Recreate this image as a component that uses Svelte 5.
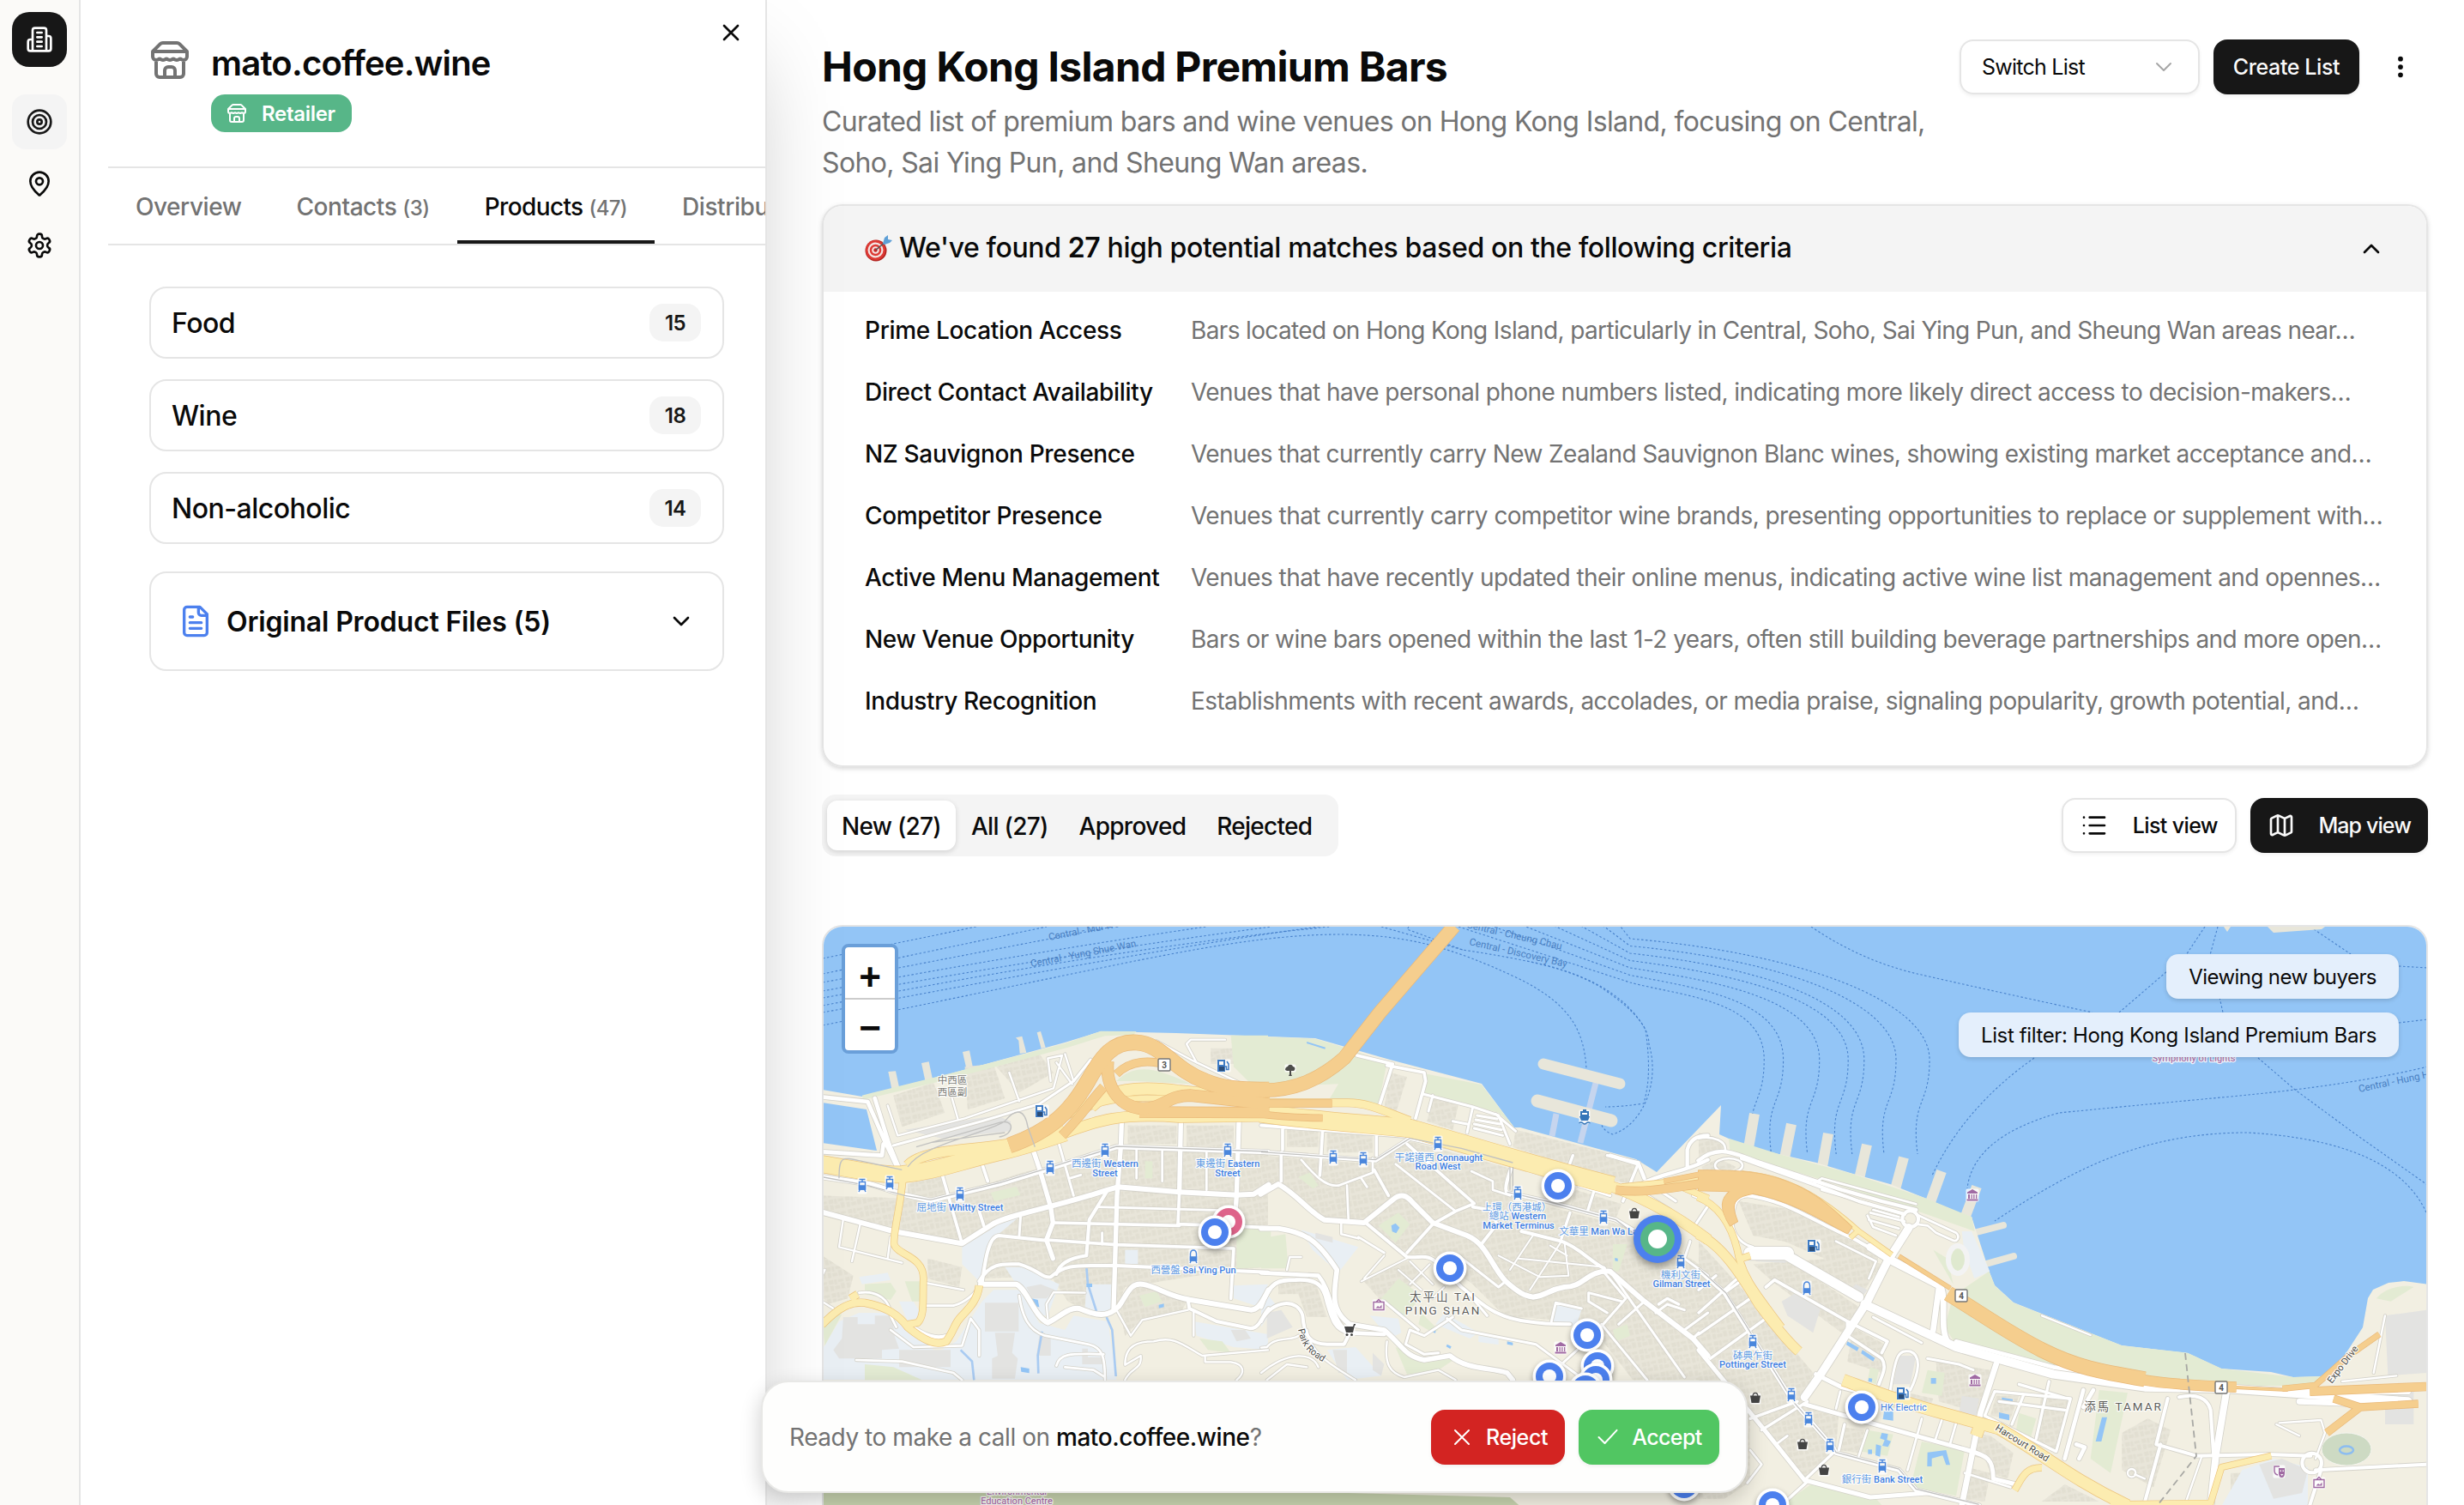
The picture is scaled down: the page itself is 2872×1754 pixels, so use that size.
<script>
  // 24px stroke icons, one path string each
  const icons = {
    building: 'M6 22V4a2 2 0 0 1 2-2h8a2 2 0 0 1 2 2v18Z M6 12H4a2 2 0 0 0-2 2v6a2 2 0 0 0 2 2h2 M18 9h2a2 2 0 0 1 2 2v9a2 2 0 0 1-2 2h-2 M10 6h4 M10 10h4 M10 14h4 M10 18h4',
    target: 'M2 12a10 10 0 1 0 20 0a10 10 0 1 0-20 0 M6 12a6 6 0 1 0 12 0a6 6 0 1 0-12 0 M10 12a2 2 0 1 0 4 0a2 2 0 1 0-4 0',
    pin: 'M20 10c0 4.993-5.539 10.193-7.399 11.799a1 1 0 0 1-1.202 0C9.539 20.193 4 14.993 4 10a8 8 0 0 1 16 0 M9 10a3 3 0 1 0 6 0a3 3 0 1 0-6 0',
    settings: 'M12.22 2h-.44a2 2 0 0 0-2 2v.18a2 2 0 0 1-1 1.73l-.43.25a2 2 0 0 1-2 0l-.15-.08a2 2 0 0 0-2.73.73l-.22.38a2 2 0 0 0 .73 2.73l.15.1a2 2 0 0 1 1 1.72v.51a2 2 0 0 1-1 1.74l-.15.09a2 2 0 0 0-.73 2.73l.22.38a2 2 0 0 0 2.73.73l.15-.08a2 2 0 0 1 2 0l.43.25a2 2 0 0 1 1 1.73V20a2 2 0 0 0 2 2h.44a2 2 0 0 0 2-2v-.18a2 2 0 0 1 1-1.73l.43-.25a2 2 0 0 1 2 0l.15.08a2 2 0 0 0 2.73-.73l.22-.39a2 2 0 0 0-.73-2.73l-.15-.08a2 2 0 0 1-1-1.74v-.5a2 2 0 0 1 1-1.74l.15-.09a2 2 0 0 0 .73-2.73l-.22-.38a2 2 0 0 0-2.73-.73l-.15.08a2 2 0 0 1-2 0l-.43-.25a2 2 0 0 1-1-1.73V4a2 2 0 0 0-2-2z M9 12a3 3 0 1 0 6 0a3 3 0 1 0-6 0',
    store: 'm2 7 4.41-4.41A2 2 0 0 1 7.83 2h8.34a2 2 0 0 1 1.42.59L22 7 M4 12v8a2 2 0 0 0 2 2h12a2 2 0 0 0 2-2v-8 M15 22v-4a2 2 0 0 0-2-2h-2a2 2 0 0 0-2 2v4 M2 7h20 M22 7v3a2 2 0 0 1-2 2a2.7 2.7 0 0 1-1.59-.63.7.7 0 0 0-.82 0A2.7 2.7 0 0 1 16 12a2.7 2.7 0 0 1-1.59-.63.7.7 0 0 0-.82 0A2.7 2.7 0 0 1 12 12a2.7 2.7 0 0 1-1.59-.63.7.7 0 0 0-.82 0A2.7 2.7 0 0 1 8 12a2.7 2.7 0 0 1-1.59-.63.7.7 0 0 0-.82 0A2.7 2.7 0 0 1 4 12a2 2 0 0 1-2-2V7',
    close: 'M18 6 6 18 M6 6l12 12',
    file: 'M15 2H6a2 2 0 0 0-2 2v16a2 2 0 0 0 2 2h12a2 2 0 0 0 2-2V7Z M14 2v4a2 2 0 0 0 2 2h4 M10 9H8 M16 13H8 M16 17H8',
    down: 'm6 9 6 6 6-6',
    up: 'm18 15-6-6-6 6',
    more: 'M12 5v.01 M12 12v.01 M12 19v.01',
    list: 'M3 5v.01 M3 12v.01 M3 19v.01 M8 5h13 M8 12h13 M8 19h13',
    map: 'M14.106 5.553a2 2 0 0 0 1.788 0l3.659-1.83A1 1 0 0 1 21 4.619v12.764a1 1 0 0 1-.553.894l-4.553 2.277a2 2 0 0 1-1.788 0l-4.212-2.106a2 2 0 0 0-1.788 0l-3.659 1.83A1 1 0 0 1 3 19.381V6.618a1 1 0 0 1 .553-.894l4.553-2.277a2 2 0 0 1 1.788 0z M15 5.764v15 M9 3.236v15',
    check: 'M21 5 9 18l-6-6'
  };

  const categories = [
    { name: 'Food', count: 15 },
    { name: 'Wine', count: 18 },
    { name: 'Non-alcoholic', count: 14 }
  ];

  const criteria = [
    ['Prime Location Access', 'Bars located on Hong Kong Island, particularly in Central, Soho, Sai Ying Pun, and Sheung Wan areas near…', 'tightest'],
    ['Direct Contact Availability', 'Venues that have personal phone numbers listed, indicating more likely direct access to decision-makers…', 'tight'],
    ['NZ Sauvignon Presence', 'Venues that currently carry New Zealand Sauvignon Blanc wines, showing existing market acceptance and…', 'tighter'],
    ['Competitor Presence', 'Venues that currently carry competitor wine brands, presenting opportunities to replace or supplement with…', ''],
    ['Active Menu Management', 'Venues that have recently updated their online menus, indicating active wine list management and opennes…', ''],
    ['New Venue Opportunity', 'Bars or wine bars opened within the last 1-2 years, often still building beverage partnerships and more open…', ''],
    ['Industry Recognition', 'Establishments with recent awards, accolades, or media praise, signaling popularity, growth potential, and…', 'tighter']
  ];

  // Map geometry. Every tile has its own origin, three units to a pixel.
  const tiles = [
    {
      x: 958, y: 1180,
      land: [
        'M232 207L258 205 272 270 245 272Z', 'M348 177L374 172 388 238 362 242Z', 'M492 138L516 133 529 198 506 200Z',
        'M678 88L700 83 715 140 692 144 688 98Z', 'M752 70L765 66 782 122 767 126Z'
      ],
      green: [
        'M1030 240C1100 170 1180 200 1290 250L1100 240Z', 'M1430 80L1560 80V262L1500 250 1440 190Z', 'M150 950l90-5 20 30-20 30-90-20z',
        'M290 940h55v70h-30z', 'M1450 750h120v140l-120 5z', 'M0 1065l70-10-60 110z', 'M150 1230l100 10 100 45h-200z',
        'M1320 1140l80 10 30 40-80-10z', 'M590 630l90-22 14 30-90 22z', 'M1130 520h26v60h-26z', 'M140 290L440 215 850 108 975 65 1100 66 1090 78 990 82 860 122 450 232 145 305Z', 'M1110 990l60-15 20 35-60 20z'
      ],
      pale: [
        'M60 1080L130 1050H270L400 1190 470 1150 560 1010 600 970H690L760 1085 850 1110 880 1060 1000 1080 1030 1285H0V1180Z',
        'M490 820L620 740 690 715 600 790 570 880 550 940 490 880Z', 'M640 890L700 890 830 950 790 1060 740 1060 700 980Z',
        'M925 950h90v90l-50 10-45-20Z', 'M1300 1080L1560 1125V1180L1440 1170 1310 1130Z', 'M1440 955L1560 950 1530 1030 1440 1000Z', 'M270 1010l50 0 30 50-50 20z', 'M130 925l100-15 10 25-100 15z', 'M1060 830h45v50h-45z'
      ],
      grey: [
        'M75 1065h50v25h60v-30h60l10 75 15 40-60 5v30H60l-20-30 30-40z', 'M570 1015h118v100h-118z', 'M605 1120h70l-10 70 20 20-10 70h-80v-70l20-10z', 'M270 1180h180v60h-180z',
        'M290 410l320-50 50 20v35l-240 25z', 'M715 960l50-10 50 20-30 30-50 0z', 'M760 1130h40v70h-50z', 'M910 1175h20v30h60v25h-80z', 'M1430 1110h50l20 30-50 10z'
      ],
      block: [
        'M250 290L390 245 430 350 280 400Z', 'M500 190L600 180 640 300 510 340Z', 'M610 190L760 145 810 210 690 280Z', 'M1360 125h100v55h-100z', 'M1480 115h80v95h-80z',
        'M0 640L290 650 380 665 700 560 1040 470 1560 490V890L1440 900 1060 960 1040 1010 960 1060 860 1010 800 920 560 930 490 810 250 765 0 700Z',
        'M300 600L420 565 450 640 380 650 300 630Z', 'M1070 395h170v65h-170z', 'M1275 395h165v75h-165z', 'M0 850L110 920 90 1000 20 1020 0 990Z', 'M1040 1030l70-80 170 50-20 40-140 30-60 60z', 'M370 860l120 30-10 70-110-30z'
      ],
      water: ['M735 1000l20 5 5 25-18-2z', 'M925 948h20v12h-20z', 'M695 1240l30 5v16l-28-5z', 'M1178 1022l18-4 0 12-18 4z'],
      stream: ['M925 890L930 950 960 1045', 'M995 1065L1015 1110 1028 1272', 'M770 1115L755 1200 757 1262', 'M485 1180L525 1220 532 1285'],
      white: [
        [14, 'M0 295L160 312 220 450 265 545M185 300L235 460 270 545M0 487L210 500 215 460'],
        [7, 'M230 325L265 430 500 370 810 265 840 150 790 160 800 240M655 210L690 310M455 300L475 370M1170 100L1300 170 1470 250M1410 95H1290L1275 110 1310 175M820 175L875 250M850 145L880 240'],
        [9, 'M250 465L560 380 760 320 880 240 940 165'],
        [16, 'M0 575L170 600 290 638 380 658 620 600 800 545 1030 470 1560 488'],
        [18, 'M0 698L250 765 490 808 600 738C660 705 800 685 1000 620L1035 610 1250 628 1450 638 1510 635 1562 602'],
        [11, 'M560 530L580 590M420 565L490 808M550 695L566 745'],
        [16, 'M735 470L765 560 800 680 808 735 785 795 808 860'],
        [9, 'M825 445L880 640M695 710L690 780M865 580l40-12M980 770v40'],
        [16, 'M1048 385L1045 470 1032 640 1020 1035M1255 385L1250 628M1458 385L1450 640 1446 700'],
        [11, 'M1250 628L1245 740 1560 752M808 735L1250 745M785 795L1030 812 1440 825M1440 825L1430 1000'],
        [8, 'M1100 480V580M1190 485V590M1345 490V620M965 680L1400 692'],
        [12, 'M1000 620L935 725 925 850C860 860 830 880 820 915'],
        [12, 'M560 945C570 880 580 780 620 780L785 797'],
        [12, 'M550 940C590 870 640 880 690 880C760 900 770 930 800 925C850 880 880 885 1030 885L1560 908'],
        [18, 'M555 950H680C720 970 740 1060 790 1085C840 1060 860 1030 900 1035C960 1060 1000 1070 1040 1025C1070 980 1080 945 1120 950C1180 960 1200 990 1290 1005L1500 1040C1530 1040 1545 1000 1562 970'],
        [12, 'M1280 1005L1285 1035 1380 1080 1500 1105C1530 1105 1540 1060 1562 1035'],
        [7, 'M1030 1040L1080 1130 1120 1075 1280 1040M1060 1230C1060 1160 1110 1150 1160 1150C1230 1130 1260 1160 1330 1200L1560 1180M1340 1205V1222H1430C1480 1230 1480 1260 1450 1285M1060 1285C1080 1240 1120 1250 1115 1200L1060 1232M1300 1045V1130'],
        [7, 'M360 945L495 970M60 820L280 875M75 720L60 820M135 735L105 870M240 785L230 860M790 1070L785 1020 810 978 920 980M0 1010L40 1035'],
        [8, 'M130 980C200 970 240 1010 240 1060L260 1100M360 1025H460C500 1015 540 980 550 955M240 1110L320 1170 490 1165 520 1070 550 1110V1200M120 1215L280 1220 460 1260 490 1285'],
        [8, 'M690 990C700 1060 720 1110 780 1130L930 1160C980 1170 990 1200 990 1285M820 1235C830 1195 860 1190 985 1195M850 1240L950 1250 990 1275M0 920L10 900'],
        [14, 'M310 1095C360 1130 400 1145 440 1130']
      ],
      yellow: [
        [58, 'M0 530C100 545 200 570 280 566C400 555 480 520 620 488C700 470 760 450 850 420'],
        [34, 'M300 535C360 470 560 485 700 450C800 400 860 350 930 310'],
        [36, 'M850 420C960 380 1040 350 1250 366L1564 362'],
        [40, 'M940 330C1000 270 1100 255 1250 275L1564 308'],
        [18, 'M900 350C1000 290 1100 300 1300 300'],
        [22, 'M283 580C275 680 250 760 252 810C265 850 355 850 355 930C352 1010 360 1060 335 1085L300 1090'],
        [24, 'M0 1092C60 1030 100 1010 150 1015C230 1030 270 1060 300 1100C360 1150 400 1165 435 1150C470 1100 460 1090 490 1060C520 1030 545 1000 550 955M100 1000L125 985']
      ],
      orange: [
        [30, 'M840 430C900 370 940 310 985 260'],
        [26, 'M1030 215C1080 165 1150 165 1210 185'],
        [36, 'M1110 348L1564 350'],
        [40, 'M1000 170C990 260 1040 325 1110 335C1200 340 1200 290 1290 290L1564 320'],
        [52, 'M655 465C800 415 870 345 930 240C980 150 1020 100 1100 105C1190 110 1230 200 1340 240C1400 265 1460 272 1564 270']
      ],
      rail: 'M0 575L160 605 290 640 380 655 620 596 800 541 1030 468 1560 486M300 540C350 460 560 430 640 380C680 330 710 340 720 400L745 470M60 580C60 500 70 505 140 520L280 550M380 455L560 430 640 420M330 470L620 385C680 370 670 430 620 435'
    },
    {
      x: 1470, y: 1180,
      land: [],
      green: [
        'M0 84L190 92 300 125 440 175 410 322 240 300 270 250 0 260Z', 'M580 215L770 252 885 402 830 350 560 280Z', 'M410 745L480 700 520 740 470 805Z',
        'M0 790l85-15 10 120h-95z', 'M130 575l40-15 30 45-20 10z', 'M1230 810h50l-30 95h-20z', 'M420 1000l60-70 80 60-60 80z', 'M470 1170l110 45 100-5-60 40-110 15z',
        'M1230 1110l50-20 10 40-50 20z', 'M560 1050l60 60-20 10-50-30z'
      ],
      pale: ['M140 760L340 820 270 910 180 830Z', 'M0 960l50 60-50 80z', 'M1030 1020l90 20-20 60-80-20z', 'M640 1050l120 70-30 20-120-50z', 'M230 1180l100-10 90 100-120 15z', 'M380 1060l100 10 10 50-40 20z', 'M760 1130l70 10 0 22-70-10z'],
      grey: ['M20 1050l50-10 40 60-90 40z', 'M250 1180h50v80h-30z', 'M190 770l60 15 0 20-60-15z', 'M390 1190l40 40-10 40-30-20z'],
      block: [
        'M0 115h45l25 20v80H0z', 'M90 405h110v65h-110z', 'M230 415h160v75h-160z', 'M450 210l60 15-40 130-40-15z', 'M600 300l90 20-20 90-90-30z',
        'M0 500L400 530 520 450 870 545 860 640 1220 735 1380 780 1560 900V1285H1300L1180 1130 1080 1080 850 1060 740 950 600 850 520 850 360 730 230 720 60 610 0 630Z',
        'M890 410L1310 515 1300 590 1090 540 880 470Z', 'M1100 620l160 50-20 50-160-40z', 'M350 930l160-60 60 50-130 110z', 'M60 940l130 5 40 120-70 0-30-80-70 0z', 'M1220 500l90 20-20 80-90-20z'
      ],
      water: ['M455 745l15-8 14 15-12 20-14-6z', 'M466 1035l30 20-4 10-30-20z', 'M595 1105l16 6-2 10-14-6z', 'M860 1150l20 4v10l-20-4z', 'M650 1160l15 8-4 8-14-8z', 'M1237 858l10 2v10l-10-2z', 'M160 102l65 20-2 6-64-20z'],
      stream: [],
      white: [
        [13, 'M0 488L400 518 520 440 700 480 880 530C860 580 850 620 860 630L1000 660 1240 725 1300 760'],
        [11, 'M0 395L500 432M75 400V480M215 410L205 570M403 430V500M70 590V490'],
        [18, 'M-2 635L60 600C130 640 160 690 220 725L360 735 460 655C490 630 510 640 530 665L600 735 720 780C790 810 800 880 855 940C900 980 920 990 950 995C1000 990 1000 970 1060 960C1130 960 1140 900 1220 905L1340 1010 1510 1140 1562 1200'],
        [8, 'M140 515C180 560 220 610 270 605L390 560V510M300 605L305 720M350 580l20 30M340 790L280 775V740M340 785L430 840'],
        [11, 'M395 550L445 640M510 460L745 668 680 695 600 740 510 840M740 680L800 690 825 740 770 810'],
        [8, 'M470 530L680 695M735 555L810 590V620L870 640'],
        [10, 'M880 530L1050 590M1110 605L1220 640M1165 620L1140 700M1080 700L1050 790M1210 500L1320 525 1265 660M1075 540L1090 500'],
        [12, 'M910 765L1050 800C1110 820 1150 870 1200 895M365 735L510 855C560 860 580 840 620 880L700 960C790 1030 820 1090 1080 1090'],
        [6, 'M950 780L870 900M1050 800L940 970M1060 800L1075 920 975 925 830 850M1010 815L1070 850M900 860L1200 890M510 860L350 940M590 880L520 950M430 850L360 930M480 900L560 970M520 870L600 950M640 960L600 1000'],
        [9, 'M690 850L830 960 855 940M650 1070L700 1110 960 1160 1130 1285M670 1065L570 1130 520 1110 505 1160 570 1195 620 1190M430 1010L550 1110M740 1000L790 1060'],
        [17, 'M0 755H60C160 770 200 800 265 900C255 980 240 1040 310 1090L430 1110C500 1170 500 1200 570 1215L660 1200C720 1250 800 1240 860 1260L880 1285'],
        [14, 'M0 910L200 920C250 980 240 1070 300 1115M0 1030C30 940 60 935 120 935C200 930 220 960 230 1010C250 1080 260 1110 310 1120L430 1125'],
        [12, 'M0 1080C40 1000 130 1000 145 1060C150 1130 170 1160 230 1160H290L310 1120'],
        [7, 'M130 1130C110 1150 50 1130 20 1170L0 1172M160 1110C170 1190 240 1230 330 1285M0 1260C100 1180 180 1190 200 1240M440 1150C430 1230 450 1260 500 1275L620 1250 680 1285M90 900L100 855H140M20 1285L90 1230 160 1240'],
        [9, 'M1220 905L1480 1275M1200 910L1275 1000 1170 1120 1050 1230M1145 980L1260 1010M1145 980V1010L1210 1050M1190 1090L1350 1285M1480 1110L1562 1050M1340 1010L1250 1090M1380 1050L1420 1020 1480 1040M1030 1015L1120 1035M1030 1015L1015 1080'],
        [11, 'M335 150L460 180 415 320M440 185L570 210 575 240 540 370'],
        [9, 'M565 285L740 330 720 420M740 330L830 360 870 460M600 290L585 345M670 380L720 390M755 360L825 372M750 375L835 390M745 390L840 410M745 405L845 430M820 355L890 415'],
        [13, 'M1330 600C1400 560 1480 560 1562 515M1490 540V480C1500 440 1530 430 1562 430M1220 500L1320 530 1340 580'],
        [9, 'M1500 800L1480 860 1562 920M1350 640L1430 690M1390 620L1450 660M1510 640L1560 660M1560 680L1520 740'],
        [10, 'M1390 1020l30-20 40 20M1510 1140l20-20']
      ],
      yellow: [
        [26, 'M0 316H300C380 315 440 350 520 378'],
        [62, 'M-4 352C200 380 380 390 520 405C650 440 900 520 1230 605'],
        [36, 'M1200 600C1330 640 1450 710 1564 795'],
        [20, 'M1260 610L1560 580M1470 610L1564 650']
      ],
      orange: [
        [24, 'M-4 318H248'], [22, 'M-4 354C80 368 150 368 215 369'], [28, 'M1240 620C1350 635 1450 608 1564 596'], [16, 'M1408 590L1564 560'],
        [46, 'M-4 272C120 275 210 230 290 160L415 0 675-302']
      ],
      rail: 'M0 488L400 515 520 440 700 475 880 525M860 628L1000 660 1240 725 1300 770M870 540V620M880 540V625'
    },
    {
      x: 1980, y: 1300,
      land: [],
      green: [
        'M105 80L280 135 540 205 790 288 955 355 965 405 780 340 400 215 110 130Z',
        'M890 630L1015 545 1035 595 1100 655 1380 765 1480 805 1710 830 1828 885 2080 915 2180 912 2140 945H1600L1240 900 900 800 860 740Z',
        'M820 470L870 500 890 590Z', 'M400 1285L620 1340 640 1362H290Z', 'M780 1140L930 1170 900 1330 740 1300Z', 'M1120 1040l60 20-20 70-50-30z',
        'M1400 960L1500 970 1440 1250 1370 1200Z', 'M600 880l30 10-10 50-30-10z', 'M590 1100l90 15-20 75-90-15z', 'M800 890l60 10-10 80-70-10z', 'M2370 640C2400 600 2470 590 2500 600L2420 650Z', 'M470 320L540 380 520 400 450 340Z'
      ],
      pale: ['M1900 1240L2010 1200 2130 1230V1362H1830Z', 'M920 405h34l64 140-54 25-36-100z'],
      grey: ['M1960 1220l80-20 90 40-20 80-100 20z', 'M190 480l100-20 60 30-50 25-100-5z', 'M510 620l40-30 40 20-30 40z', 'M290 650l50-30 90 40-30 100-90-60z', 'M920 980l60 10-10 60-60-10z', 'M700 840h60l-20 100h-60z', 'M2400 700L2544 680V900L2410 910Z', 'M2400 960h100v120h-100z'],
      block: [
        'M140 300L330 330 630 490 600 580 440 500 300 440 190 420Z', 'M550 495L640 520 560 640 330 510Z',
        'M0 440L200 660 400 900 370 1000 480 1180 370 1270 180 1050 170 950 0 930Z', 'M190 520L320 510 560 670 500 760 270 590Z', 'M830 860L1020 890 980 1040 840 1000Z',
        'M690 960l130 30-20 50-130-20z', 'M370 1010l120 30-10 120-60-60z', 'M500 1090l80 10-20 80-70-10z', 'M0 930h180v350l-90 60H0z', 'M540 740l110 60-10 100-120-40z',
        'M960 1110l60 10 80 60-20 90-60-20-20-50-50-10z', 'M940 1230l80 20-20 100-70-10z', 'M1040 980l80 0-30 80-70-10z', 'M1480 1110l90-50 80 40-60 200-110-60z', 'M1200 960l100 30-40 180-80-30z', 'M1860 1250h70v110h-70z', 'M1280 1290l120 60h-200z',
        'M10 180l60-30 60 30-20 20H20z', 'M0 60l70 20 20 40-90 30z'
      ],
      water: [
        'M520 790l40 22-6 12-38-22z', 'M572 820l44 28-6 12-42-28z', 'M648 1035h32v32l-36-5z', 'M800 1178l65-8 14 52-14 0-12-33-38 10v28l-16 0z', 'M1060 986l38 6v15l-38-6z', 'M1050 1038l36 8v20l-36-8z',
        'M1410 1055h18l-20 85h-20z', 'M595 918l12 2-2 12-12-2z', 'M640 1110l22 4-4 20 14 5-10 20-20-4 8-20-16-6z', 'M620 1150l18 5-4 38-16-5z', 'M812 918l18 0 0 20-18 0z', 'M592 1168l14 0v16l-14 0z'
      ],
      stream: [],
      white: [
        [13, 'M-2 158C60 110 100 120 200 160L500 260 640 300 760 330'],
        [8, 'M0 80C50 70 100 90 92 125M57 175a48 25 0 1 0 96 0a48 25 0 1 0-96 0M400 240L430 220 760 310M430 260L600 310M610 330L700 355M590 350L610 390 690 420M600 340L720 370M595 365L700 395'],
        [12, 'M150 150L400 240 560 300 720 345'],
        [12, 'M712 362a28 28 0 1 0 56 0a28 28 0 1 0-56 0'],
        [8, 'M770 350L900 410C915 425 905 445 885 435L830 410 800 385 760 380'],
        [28, 'M735 392L660 510 590 650 430 900 370 985'],
        [12, 'M120 350C120 290 150 270 200 285C330 310 400 370 540 430L680 510'],
        [28, 'M600 460L680 510 845 595'],
        [20, 'M845 595C870 640 840 740 870 790M840 600L820 750'],
        [46, 'M180 482L310 482'],
        [34, 'M300 485L560 635'],
        [30, 'M580 660L900 810 1240 905 1560 950 1850 955 2480 1000'],
        [14, 'M900 790L1240 880 1560 925 2160 975'],
        [8, 'M610 705L780 795M480 440L620 510 595 570M120 350C110 400 140 450 190 460'],
        [11, 'M235 600L265 575 520 720 520 770 640 850C660 880 640 910 630 940M520 720L660 790 640 830'],
        [20, 'M1040 870L985 1040 920 1362'],
        [10, 'M1035 965L1300 990 1250 1175 1000 1050 1035 965M1120 940L1290 990M1225 930L1180 1130M1135 980L1095 1080M1050 1000L1280 1030'],
        [14, 'M1345 960L1280 1200M1380 960L1345 1020M1320 1150L1350 1160 1330 1200'],
        [15, 'M0 820L230 1100 370 1275M0 540L90 620 330 1000 470 1160 480 1180 700 1240 760 1310 980 1364'],
        [10, 'M90 620L160 570M0 690L135 570M0 765L180 640M40 850L235 710M180 1060L345 1000M220 1100L380 1000M370 1275L470 1180M510 1080L490 1170M380 1280L290 1362M60 560L0 610'],
        [15, 'M370 1010L760 1120 940 1170C1010 1190 1030 1200 1030 1270L1110 1290M370 1275L600 1335 800 1320M410 905L500 950 600 975'],
        [8, 'M780 1060L730 1240M850 1065l-25 75M900 1075l-20 70M495 965l-15 60M930 1250L1090 1300M590 1100l-30 90M270 1150L310 1120M180 1170L220 1220 170 1285'],
        [9, 'M670 960C690 830 700 820 740 825C780 840 770 900 740 960M800 850L910 870 960 890'],
        [24, 'M1847 955L1808 1190 1790 1362'],
        [20, 'M2100 965H2480M2100 1000L2380 1010'],
        [12, 'M2544 1220L2157 1240M2176 1240L2137 1362M1640 990L1600 1150 1740 1190 1990 1185 2140 1190M1615 1150L1557 1362M1680 985C1740 970 1780 990 1790 1030L1800 1180M2110 1215a34 34 0 1 0 68 0a34 34 0 1 0-68 0'],
        [7, 'M2030 1075L2176 1065 2190 1110 2157 1200M2100 1120L2020 1080M1760 1190L1700 1362M1500 1250a14 14 0 1 0 28 0a14 14 0 1 0-28 0M1525 1255L1560 1270M2400 700L2360 900M2250 930L2440 910M1200 700L1370 768']
      ],
      yellow: [
        [16, 'M150 203C300 212 420 280 560 405L675 487M530 428L560 400'],
        [32, 'M-4 415C80 450 150 560 210 660C270 740 310 790 350 825'],
        [22, 'M-4 285C60 310 110 370 135 470C150 560 200 620 290 740M150 500L180 490'],
        [14, 'M0 232H62'],
        [40, 'M505 925C600 960 700 1000 850 1040L1050 1095C1200 1180 1300 1270 1500 1364M970 1120L985 1080'],
        [22, 'M1200 1232C1140 1230 1130 1270 1105 1310'],
        [20, 'M1440 1360L1790 1355 1828 1230 2002 1190']
      ],
      orange: [
        [13, 'M700 492L880 604'],
        [50, 'M872 622C1000 700 1080 760 1200 820C1320 880 1400 895 1560 922'],
        [34, 'M1556 925C1640 940 1750 945 1880 950'],
        [8, 'M1860 950L2060 960'],
        [28, 'M2137 965L2544 948'],
        [18, 'M2041 955L2157 943 2273 840 2380 765'],
        [24, 'M2516 1008L2313 1020 2196 1110M2313 1020L2220 990'],
        [2, 'M0 193C120 190 220 200 280 222C400 260 460 320 535 390L520 412C420 360 330 300 190 272C120 285 110 310 135 370L110 385C70 320 80 290 110 265L0 262Z', true]
      ],
      rail: 'M0 535L95 620 330 1000 470 1160 480 1178 700 1236 760 1306 980 1360'
    }
  ];

  const coast =
    'M958 1270L1005 1278 1105 1252 1241 1215 1283 1202 1371 1204 1478 1208 1533 1210 1620 1235 1727 1263 1765 1314 1772 1314 1907 1351 1931 1366 2006 1288 2004 1322 2015 1327 2033 1335 2073 1345 2117 1355 2160 1368 2203 1380 2243 1396 2283 1413 2298 1418 2318 1480 2325 1498 2347 1518 2440 1555 2473 1568 2550 1577 2589 1595 2647 1599 2673 1605 2705 1604 2728 1587 2754 1547 2760 1513 2766 1503 2784 1495 2802 1493 2832 1497V1760H958Z';

  // pier outlines as thick strokes: [width, path, round cap]
  const piers = [
    [13, 'M1799 1240L1888 1263', true], [15, 'M1792 1283L1878 1306', true],
    [12, 'M2045 1298L2038 1338', false], [12, 'M2088 1310L2080 1350', false], [12, 'M2131 1321L2124 1360', false],
    [12, 'M2176 1334L2167 1374', false], [12, 'M2219 1349L2209 1386', false], [12, 'M2263 1365L2249 1404', false],
    [12, 'M2304 1383L2290 1420', false], [8, 'M2300 1437L2335 1428', true], [8, 'M2315 1473L2347 1464', true]
  ];

  const fan = [252, 288, 356, 410, 440, 500, 563].map((end, i) => {
    const x = 1900 + end * 0.62;
    const y = 1145 - i * 8.5;
    return `M${1700 + i * 28} ${y - 65 + i * 4}L1900 ${y}C${1960 + i * 22} ${y + 16} ${x} ${1165} ${x} ${1235}C${x} 1290 ${x - 22} 1280 ${x - 14} 1345`;
  });

  const ferries = [
    'M959 1117L1138 1080', 'M959 1135L1220 1080', 'M959 1145L1297 1080', 'M959 1155Q1200 1110 1406 1080', 'M959 1163Q1240 1112 1482 1080',
    'M959 1172Q1300 1105 1550 1080', 'M959 1180Q1300 1115 1480 1088T1640 1083L1705 1107',
    'M959 1195L1259 1133C1400 1104 1480 1089 1565 1089C1640 1090 1690 1103 1769 1140C1830 1170 1846 1200 1849 1245',
    'M1610 1080L1705 1107C1790 1120 1830 1130 1865 1150C1910 1180 1922 1200 1922 1217C1935 1260 1916 1310 1880 1322Q1868 1318 1866 1308',
    'M1780 1120C1830 1130 1890 1150 1918 1200C1925 1250 1920 1270 1916 1286Q1890 1290 1871 1290',
    ...fan,
    'M2111 1080Q2170 1120 2235 1135T2439 1180', 'M2570 1080L2548 1113 2470 1180', 'M2371 1233Q2290 1290 2252 1370', 'M2585 1080L2576 1113 2591 1180',
    'M2697 1083L2740 1112', 'M2796 1126L2830 1128', 'M2796 1192L2830 1188',
    'M2830 1243Q2740 1265 2600 1278T2400 1297Q2300 1325 2293 1385', 'M2632 1233L2675 1270 2743 1320 2828 1380',
    'M2828 1413Q2790 1330 2620 1320C2500 1320 2420 1360 2325 1423'
  ];

  const markers = [
    [1432, 1424, 'pink'], [1416, 1436, ''], [1816, 1382, ''], [1690, 1478, ''], [1850, 1556, ''], [1862, 1592, ''],
    [1860, 1608, ''], [1848, 1619, ''], [1806, 1604, ''], [2170, 1640, ''], [1963, 1730, ''], [2066, 1754, '']
  ];

  const symbols = [
    ['tram', [[1288, 1341], [1431, 1341], [1224, 1361], [1119, 1392], [1005, 1382], [1037, 1379], [1554, 1349], [1589, 1351], [1676, 1333], [1769, 1391], [1869, 1419], [1959, 1471], [2043, 1564], [2088, 1626], [2108, 1654], [2133, 1685], [2194, 1709]]],
    ['metro', [[1391, 1464], [2106, 1501]]],
    ['fuel', [[1214, 1295], [1426, 1242], [2114, 1452], [2218, 1624]]],
    ['museum', [[1819, 1571], [2299, 1393], [2302, 1609]]],
    ['gallery', [[1607, 1521], [2703, 1728]]],
    ['masks', [[2657, 1715]]],
    ['basket', [[1905, 1414], [2046, 1629], [2101, 1683], [2126, 1713]]],
    ['cart', [[1573, 1550]]],
    ['tree', [[1504, 1247]]],
    ['ferry', [[1847, 1301]]]
  ];

  // x, y, class, Chinese part, Latin part
  const labels = [
    [1288, 1360, 'transit', '西邊街', ' Western'], [1288, 1371, 'transit', '', 'Street'],
    [1431, 1360, 'transit', '東邊街', ' Eastern'], [1431, 1371, 'transit', '', 'Street'],
    [1119, 1411, 'transit', '屈地街', ' Whitty Street'], [1391, 1484, 'transit', '西營盤', ' Sai Ying Pun'],
    [1677, 1353, 'transit', '干諾道西', ' Connaught'], [1676, 1363, 'transit', '', 'Road West'],
    [1768, 1411, 'transit', '上環（西港城）', ''], [1769, 1421, 'transit', '總站', ' Western'], [1770, 1432, 'transit', '', 'Market Terminus'],
    [1869, 1439, 'transit', '文華里', ' Man Wa Lane'],
    [1959, 1490, 'transit', '機利文街', ''], [1960, 1500, 'transit', '', 'Gilman Street'],
    [2043, 1584, 'transit', '砵典乍街', ''], [2043, 1594, 'transit', '', 'Pottinger Street'],
    [2194, 1728, 'transit', '銀行街', ' Bank Street'], [2219, 1644, 'transit plain', '', 'HK Electric'],
    [1110, 1263, 'place', '中西區', ''], [1110, 1277, 'place', '西區副', ''],
    [1682, 1516, 'area', '太平山', ' TAI'], [1682, 1532, 'area', '', 'PING SHAN'], [2475, 1644, 'area', '添馬', ' TAMAR'],
    [2557, 1237, 'culture', '', 'Symphony of Lights'], [1185, 1742, 'culture', '', 'Environmental'], [1185, 1753, 'culture', '', 'Education Centre']
  ];

  const shields = [[1357, 1241, 3], [2286, 1510, 4], [2589, 1617, 4]];
</script>

{#snippet icon(name, size = 32, weight = 2)}
  <svg class="icon" width={size} height={size} viewBox="0 0 24 24" stroke-width={weight}>
    <path d={icons[name]} />
  </svg>
{/snippet}

{#snippet roads(kind)}
  {#each tiles as tile}
    <g transform="translate({tile.x} {tile.y}) scale(.33333)" class="road {kind}-case">
      {#each tile[kind] as [w, d, area]}<path {d} stroke-width={w + (kind === 'white' ? 5 : 4)} class:area />{/each}
    </g>
  {/each}
  {#each tiles as tile}
    <g transform="translate({tile.x} {tile.y}) scale(.33333)" class="road {kind}">
      {#each tile[kind] as [w, d, area]}<path {d} stroke-width={w} class:area />{/each}
    </g>
  {/each}
{/snippet}

<div class="app">
  <nav class="rail">
    <div class="logo">{@render icon('building')}</div>
    <button class="rail-item active">{@render icon('target')}</button>
    <button class="rail-item">{@render icon('pin')}</button>
    <button class="rail-item">{@render icon('settings')}</button>
  </nav>

  <aside class="panel">
    <button class="close">{@render icon('close')}</button>
    <header class="buyer">
      <div class="buyer-icon">{@render icon('store', 48)}</div>
      <div>
        <h2>mato.coffee.wine</h2>
        <span class="retailer">{@render icon('store', 24)}<span>Retailer</span></span>
      </div>
    </header>

    <div class="tabs">
      <div class="tab">Overview</div>
      <div class="tab">Contacts <small>(3)</small></div>
      <div class="tab current">Products <small>(47)</small></div>
      <div class="tab">Distributors</div>
    </div>

    <div class="products">
      {#each categories as category}
        <div class="category">
          <span>{category.name}</span>
          <span class="count">{category.count}</span>
        </div>
      {/each}
      <div class="files">
        <span class="file-icon">{@render icon('file', 40)}</span>
        <span class="files-title">Original Product Files (5)</span>
        {@render icon('down')}
      </div>
    </div>
  </aside>

  <main>
    <header class="page-head">
      <div class="intro">
        <h1>Hong Kong Island Premium Bars</h1>
        <p>Curated list of premium bars and wine venues on Hong Kong Island, focusing on Central,<br />Soho, Sai Ying Pun, and Sheung Wan areas.</p>
      </div>
      <div class="actions">
        <button class="btn select">Switch List <span class="faded">{@render icon('down', 32, 1.5)}</span></button>
        <button class="btn dark create">Create List</button>
        <button class="dots">{@render icon('more', 32, 4.3)}</button>
      </div>
    </header>

    <section class="criteria">
      <div class="criteria-head">
        <svg class="dart" viewBox="0 0 32 32">
          <circle cx="13" cy="18" r="12.5" fill="#b3231f" />
          <circle cx="12.5" cy="17.5" r="11.5" fill="#dd3a35" />
          <circle cx="12.5" cy="17.5" r="9" fill="#f4e6e4" />
          <circle cx="12.5" cy="17.5" r="6.8" fill="#dd3a35" />
          <circle cx="12.5" cy="17.5" r="4.3" fill="#f4e6e4" />
          <circle cx="12.5" cy="17.5" r="2.2" fill="#c22" />
          <path d="M12.5 17.5L24 8" stroke="#555" stroke-width="1.6" />
          <path d="M21 10L23 3 27 0 27 5 32 6 29 9 23 11Z" fill="#5d9fd6" />
        </svg>
        <h3>We've found <b>27</b> high potential matches based on the following criteria</h3>
        {@render icon('up')}
      </div>
      <div class="criteria-rows">
        {#each criteria as [label, text, fit]}
          <div class="criterion">
            <span class="label">{label}</span>
            <span class="text {fit}">{text}</span>
          </div>
        {/each}
      </div>
    </section>

    <div class="toolbar">
      <div class="segments">
        <button class="segment on">New (27)</button>
        <button class="segment">All (27)</button>
        <button class="segment">Approved</button>
        <button class="segment">Rejected</button>
      </div>
      <div class="views">
        <button class="btn light view">{@render icon('list')}<span>List view</span></button>
        <button class="btn dark view">{@render icon('map')}<span>Map view</span></button>
      </div>
    </div>

    <section class="map">
      <svg class="canvas" viewBox="960 1080 1868 700" width="1868" height="700">
        <defs>
          <pattern id="blocks" width="58" height="46" patternUnits="userSpaceOnUse" patternTransform="rotate(-12)">
            <rect x="2" y="3" width="16" height="14" /><rect x="21" y="3" width="9" height="18" /><rect x="34" y="5" width="19" height="9" />
            <rect x="3" y="22" width="12" height="18" /><rect x="19" y="26" width="18" height="12" /><rect x="41" y="19" width="13" height="20" />
          </pattern>
          <path id="park-road" d="M1513 1549C1517 1572 1526 1578 1548 1591" />
          <g id="tram" class="blue-icon">
            <path class="halo" d="M-4-8H4V8H-4Z" />
            <path d="M-3.5-7.5H3.5M0-7.5V-4.5M-3.5-4.5H3.5V4H-3.5ZM-2.5 4L-4 7M2.5 4L4 7" />
            <path class="solid" d="M-3.5 0H3.5V4H-3.5Z" />
          </g>
          <g id="metro" class="blue-icon">
            <path class="halo" d="M-4-7H4V8H-4Z" />
            <path d="M-3.5 5V-3Q-3-7 0-7T3.5-3V5ZM-2.5 5L-4 8M2.5 5L4 8" />
            <path class="solid" d="M-3.5 1H3.5V5H-3.5Z" />
          </g>
          <g id="fuel">
            <path class="halo" d="M-6-6H7V6H-6Z" />
            <path fill="#3f7cc4" fill-rule="evenodd" d="M-7-7H2V7H-7ZM-5-5V-1H0V-5Z" />
            <path fill="#2b4d78" d="M-5 1H1V6H-5Z" />
            <path fill="none" stroke="#3f7cc4" stroke-width="1.5" d="M2 1H3.5V4.5H6V-2L4-5" />
          </g>
          <g id="museum">
            <path class="halo" d="M-6-6H6V6H-6Z" />
            <path fill="#a06aa3" d="M0-7L6-3.5V-2H-6V-3.5ZM-5-1H-3V4H-5ZM-1.5-1H-.2V4H-1.5ZM1.2-1H2.5V4H1.2ZM4-1H5.3V4H4ZM-6.5 4.5H6.5V6.5H-6.5Z" />
          </g>
          <g id="gallery">
            <path class="halo" d="M-6-5H6V6H-6Z" />
            <path fill="none" stroke="#a06aa3" stroke-width="1.4" d="M-6-3.5H6V5.5H-6ZM-3-3.5L0-6.5 3-3.5" />
            <path fill="#a06aa3" d="M-3.5 3.5L-1 1 1 2.5 3.5-.5V3.5Z" />
          </g>
          <g id="masks">
            <path class="halo" d="M-6-6H5V6H-6Z" />
            <path fill="none" stroke="#a06aa3" stroke-width="1.4" d="M0-6H-6V-1Q-6 3-2 4" />
            <path fill="#a06aa3" fill-rule="evenodd" d="M-1-4H6V2Q6 7 2.5 7T-1 2ZM.5-1.5H2V0H.5ZM3.5-1.5H5V0H3.5ZM1 3H4.5L2.8 5Z" />
          </g>
          <g id="basket">
            <path class="halo" d="M-5-4H5V6H-5Z" />
            <path fill="none" stroke="#555" stroke-width="1.3" d="M-3-1C-3-7 3-7 3-1" />
            <path fill="#444" d="M-6-2.5H6L4.5 6H-4.5Z" />
          </g>
          <g id="cart">
            <path class="halo" d="M-5-5H5V6H-5Z" />
            <path fill="#444" d="M-6-4H4L5-7H7V-5.5H6L4 3H-4Z" />
            <circle cx="-3" cy="5.5" r="1.5" fill="#444" /><circle cx="2.5" cy="5.5" r="1.5" fill="#444" />
          </g>
          <g id="tree">
            <path class="halo" d="M-5-5H5V1H-5Z" />
            <path fill="#4d4d4a" d="M-6 0C-6-3-4-4-3-4C-2-7 2-7 3-4C6-4 6 0 4 1L1 1V5L2 7H-2L-1 5V1L-4 1Z" />
          </g>
          <g id="ferry">
            <path class="halo" d="M-5-6H5V7H-5Z" />
            <path fill="#3576b8" d="M-2-8H2V-6H5V0H6L4 5H-4L-6 0H-5V-6H-2Z" /><path fill="#fff" d="M-3-4H3V-2H-3Z" />
            <path fill="none" stroke="#3576b8" stroke-width="1.3" d="M-6.5 8Q-4 6-2 8T2 8 6.5 8" />
          </g>
        </defs>

        <rect class="sea" x="958" y="1078" width="1874" height="704" />
        {#each ferries as d}<path class="route" {d} />{/each}
        <g class="route-names">
          <text transform="translate(1223 1096) rotate(-11)">Central - Mui Wo</text>
          <text transform="translate(1202 1127) rotate(-11)">Central - Yung Shue Wan</text>
          <text transform="translate(1709 1081) rotate(13)">Central - Cheung Chau</text>
          <text transform="translate(1712 1101) rotate(13)">Central - Discovery Bay</text>
          <text transform="translate(2750 1273) rotate(-12)">Central - Hung Hom</text>
        </g>
        <path class="gangway" d="M1860 1262L1842 1332M1814 1298L1809 1324" />
        {#each piers as [w, d, round]}<path class="pier" class:round {d} stroke-width={w} />{/each}
        <path class="pier-land" d="M2592 1080H2600L2596 1086ZM2643 1080H2710L2706 1083 2650 1087Z" />
        <path class="land" d={coast} />
        <path class="sea" d="M958 1285L1010 1293 1022 1341 958 1332Z" />

        {#each tiles as tile}
          <g transform="translate({tile.x} {tile.y}) scale(.33333)">
            {#each tile.land as d}<path class="pier-land" {d} />{/each}
            {#each tile.block as d}<path class="block" {d} /><path fill="url(#blocks)" {d} />{/each}
            {#each tile.pale as d}<path class="pale" {d} />{/each}
            {#each tile.grey as d}<path class="grey" {d} />{/each}
            {#each tile.green as d}<path class="green" {d} />{/each}
            {#each tile.stream as d}<path class="stream" {d} />{/each}
            {#each tile.water as d}<path class="sea" {d} />{/each}
          </g>
        {/each}
        <ellipse class="pond-park" cx="2735" cy="1689" rx="29" ry="19" />
        <ellipse class="pond" cx="2735" cy="1690" rx="8" ry="4.5" />
        <ellipse class="stadium" cx="2282" cy="1468" rx="11" ry="16" />
        <path class="hill" d="M958 1738H1500L1760 1745 1800 1780H958Z" />

        {@render roads('white')}
        {@render roads('yellow')}
        {@render roads('orange')}
        {#each tiles as tile}
          <path class="tramline" transform="translate({tile.x} {tile.y}) scale(.33333)" d={tile.rail} />
        {/each}
        <path class="railway" d="M2547 1577L2560 1697 2515 1754" />

        {#each symbols as [name, spots]}
          {#each spots as [x, y]}<use href="#{name}" {x} {y} />{/each}
        {/each}
        {#each shields as [x, y, n]}
          <rect class="shield" x={x - 7} y={y - 7} width="14" height="14" rx="1.5" />
          <text class="shield-no" {x} y={y + 4}>{n}</text>
        {/each}
        {#each labels as [x, y, kind, zh, en]}
          <text class="name {kind}" {x} {y}><tspan class="zh">{zh}</tspan>{en}</text>
        {/each}
        <text class="name street"><textPath href="#park-road">Park Road</textPath></text>
        <text class="name street" transform="translate(2325 1666) rotate(32)">Harcourt Road</text>
        <text class="name street" transform="translate(2718 1613) rotate(-53)">Expo Drive</text>

        {#each markers as [x, y, tone]}
          <g class="marker {tone}">
            <circle class="ring" cx={x} cy={y} r="19.5" />
            <circle class="disc" cx={x} cy={y} r="16" />
            <circle fill="#fff" cx={x} cy={y} r="8" />
          </g>
        {/each}
        <g class="marker">
          <circle class="disc shade" cx="1932" cy="1444" r="28" />
          <circle fill="#57b688" cx="1932" cy="1444" r="20" />
          <circle fill="#fff" cx="1932" cy="1444" r="11" />
        </g>
      </svg>

      <div class="zoom">
        <button>+</button>
        <button>−</button>
      </div>
      <div class="notes">
        <span class="note viewing">Viewing new buyers</span>
        <span class="note">List filter: Hong Kong Island Premium Bars</span>
      </div>
    </section>
  </main>

  <div class="toast">
    <p>Ready to make a call on <b>mato.coffee.wine</b>?</p>
    <button class="btn reject">{@render icon('close', 32, 1.5)}<span>Reject</span></button>
    <button class="btn accept">{@render icon('check', 28, 1.7)}<span>Accept</span></button>
  </div>
</div>

<style>
  :global(body) {
    background: #fff;
  }

  .app {
    position: relative;
    display: flex;
    width: 2872px;
    height: 1754px;
    overflow: hidden;
    font-family: Inter, 'Noto Sans', sans-serif;
    color: #0a0a0a;
  }

  .app * {
    box-sizing: border-box;
  }

  button {
    padding: 0;
    border: none;
    background: none;
    font: inherit;
    color: inherit;
    letter-spacing: inherit;
    white-space: nowrap;
  }

  h1, h2, h3, p {
    margin: 0;
  }

  .icon {
    display: block;
    flex: none;
    fill: none;
    stroke: currentColor;
    stroke-linecap: round;
    stroke-linejoin: round;
  }

  /* left rail */
  .rail {
    z-index: 3;
    display: flex;
    flex-direction: column;
    align-items: center;
    gap: 8px;
    width: 94px;
    flex: none;
    padding-top: 14px;
    border-right: 2px solid #e5e5e5;
    background: #fbfaf8;
  }

  .logo, .rail-item {
    display: grid;
    place-items: center;
    width: 64px;
    height: 64px;
    border-radius: 16px;
  }

  .logo {
    margin-bottom: 24px;
    border-radius: 20px;
    background: #171717;
    color: #fff;
  }

  .rail-item.active {
    background: #f4f4f4;
    color: #171717;
  }

  /* buyer panel */
  .panel {
    position: relative;
    z-index: 2;
    width: 800px;
    flex: none;
    border-right: 2px solid #e5e5e5;
    background: #fff;
    box-shadow: 0 50px 100px -24px rgba(0, 0, 0, 0.25);
  }

  .close {
    position: absolute;
    top: 22px;
    right: 24px;
  }

  .buyer {
    display: flex;
    gap: 24px;
    height: 194px;
    padding: 46px 0 0 80px;
  }

  .buyer-icon {
    color: #737373;
  }

  .buyer h2 {
    font-size: 40px;
    line-height: 56px;
    font-weight: 600;
    letter-spacing: -0.78px;
  }

  .retailer {
    display: flex;
    align-items: center;
    gap: 17px;
    width: 164px;
    height: 44px;
    margin-top: 8px;
    padding-left: 18px;
    border-radius: 16px;
    background: #57b688;
    color: #fff;
    font-size: 24px;
    font-weight: 600;
    letter-spacing: -0.3px;
  }

  .tabs {
    display: flex;
    height: 92px;
    margin-left: 32px;
    overflow: hidden;
    border-top: 2px solid #e5e5e5;
    border-bottom: 2px solid #e5e5e5;
  }

  .tab {
    flex: none;
    padding: 0 32px;
    color: #737373;
    font-size: 28px;
    line-height: 90px;
    font-weight: 500;
    letter-spacing: -0.45px;
    white-space: pre;
  }

  .tab small {
    font-size: 24px;
    color: #737373;
  }

  .tab.current {
    border-bottom: 4px solid #171717;
    color: #0a0a0a;
    letter-spacing: -0.62px;
  }

  .products {
    display: flex;
    flex-direction: column;
    gap: 24px;
    padding: 48px 48px 0 80px;
  }

  .category {
    display: flex;
    align-items: center;
    justify-content: space-between;
    height: 84px;
    padding: 0 25px 0 24px;
    border: 2px solid #e5e5e5;
    border-radius: 20px;
    font-size: 32px;
    font-weight: 500;
    letter-spacing: -0.5px;
  }

  .count {
    width: 60px;
    height: 44px;
    border-radius: 16px;
    background: #f4f4f4;
    color: #171717;
    font-size: 24px;
    line-height: 45px;
    font-weight: 600;
    text-align: center;
  }

  .files {
    display: flex;
    align-items: center;
    height: 116px;
    margin-top: 8px;
    padding: 0 32px;
    border: 2px solid #e5e5e5;
    border-radius: 20px;
  }

  .file-icon {
    color: #4c80ee;
  }

  .files-title {
    flex: 1;
    margin-left: 16px;
    font-size: 32px;
    font-weight: 600;
    letter-spacing: -0.18px;
  }

  /* main column */
  main {
    flex: none;
    width: 1936px;
    padding: 46px 0 0 64px;
  }

  .page-head {
    display: flex;
    justify-content: space-between;
    height: 192px;
  }

  h1 {
    font-size: 48px;
    line-height: 64px;
    font-weight: 700;
    letter-spacing: -0.7px;
    white-space: nowrap;
  }

  .intro p {
    margin-top: 8px;
    color: #737373;
    font-size: 32px;
    line-height: 48px;
    letter-spacing: -0.64px;
    white-space: nowrap;
  }

  .actions {
    display: flex;
    gap: 16px;
    align-items: flex-start;
  }

  .btn {
    display: flex;
    align-items: center;
    justify-content: center;
    height: 64px;
    border-radius: 16px;
    font-size: 25px;
    font-weight: 500;
    letter-spacing: -0.4px;
    box-shadow: 0 2px 4px rgba(0, 0, 0, 0.06);
  }

  .dark {
    background: #171717;
    color: #fafafa;
  }

  .select {
    justify-content: space-between;
    width: 280px;
    padding: 0 24px;
    border: 2px solid #e5e5e5;
    font-weight: 400;
    letter-spacing: -0.75px;
  }

  .faded {
    color: #a6a6a6;
  }

  .create {
    width: 170px;
  }

  .dots {
    display: grid;
    place-items: center;
    width: 64px;
    height: 64px;
  }

  .criteria {
    height: 656px;
    overflow: hidden;
    border: 2px solid #e5e5e5;
    border-radius: 24px;
    box-shadow: 0 2px 6px rgba(0, 0, 0, 0.1), 0 2px 4px rgba(0, 0, 0, 0.06);
  }

  .criteria-head {
    display: flex;
    align-items: center;
    height: 100px;
    padding: 0 48px;
    background: #f4f4f4;
  }

  .dart {
    width: 32px;
    height: 32px;
  }

  .criteria-head h3 {
    flex: 1;
    margin-left: 8px;
    padding-bottom: 4px;
    font-size: 32px;
    font-weight: 500;
    letter-spacing: -0.38px;
  }

  .criteria-head b {
    font-weight: 600;
  }

  .criteria-rows {
    padding: 9px 48px;
  }

  .criterion {
    display: flex;
    align-items: center;
    height: 72px;
    font-size: 28px;
    white-space: nowrap;
  }

  .label {
    width: 380px;
    flex: none;
    font-weight: 500;
    letter-spacing: -0.33px;
  }

  .text {
    color: #737373;
    letter-spacing: -0.54px;
  }

  .text.tight { letter-spacing: -0.57px; }
  .text.tighter { letter-spacing: -0.6px; }
  .text.tightest { letter-spacing: -0.64px; }

  .toolbar {
    display: flex;
    justify-content: space-between;
    align-items: center;
    height: 72px;
    margin-top: 32px;
  }

  .segments {
    display: flex;
    align-items: center;
    height: 72px;
    width: 602px;
    padding-left: 6px;
    border-radius: 16px;
    background: #f4f4f4;
  }

  .segment {
    flex: none;
    height: 58px;
    padding: 1px 18px 0;
    border-radius: 12px;
    font-size: 28px;
    font-weight: 500;
    letter-spacing: -0.72px;
  }

  .segment.on {
    padding: 1px 17px 0;
    background: #fff;
    box-shadow: 0 2px 6px rgba(0, 0, 0, 0.14);
  }

  .views {
    display: flex;
    gap: 16px;
  }

  .view {
    justify-content: space-between;
    width: 204px;
    padding: 0 20px;
    letter-spacing: -0.6px;
  }

  .light {
    border: 2px solid #e5e5e5;
    background: #fff;
  }

  .dark.view {
    width: 207px;
    letter-spacing: -0.9px;
  }

  /* map */
  .map {
    position: relative;
    height: 704px;
    margin-top: 80px;
    overflow: hidden;
    border: 2px solid #e5e5e5;
    border-radius: 24px;
  }

  .canvas {
    display: block;
  }

  .sea { fill: #93c5f6; }
  .land { fill: #f2efe2; }
  .pier-land { fill: #e8e6da; }
  .pier { fill: none; stroke: #e8e6da; }
  .pier.round { stroke-linecap: round; }
  .gangway { fill: none; stroke: #c6d5ee; stroke-width: 7; }
  .block { fill: #e8e5d9; }
  .pale { fill: #e9eff4; }
  .grey { fill: #e3e3e1; }
  .green { fill: #e3ebd3; }
  .hill { fill: #c6d2ae; }
  .pond-park { fill: #cddac3; stroke: #f5f5f0; }
  .pond { fill: none; stroke: #8cbdf0; stroke-width: 2.5; }
  .stadium { fill: #dfe9cf; stroke: #f3f3f3; stroke-width: 6; }
  .stream { fill: none; stroke: #a9cbf2; stroke-width: 8; }
  #blocks rect { fill: #e2dfd2; }

  .route {
    fill: none;
    stroke: #4a83cc;
    stroke-width: 1.1;
    stroke-dasharray: 2.5 2.5;
  }

  .route-names text {
    fill: #4a80c2;
    font: 11.5px Roboto, sans-serif;
  }

  .road {
    fill: none;
    stroke-linejoin: round;
    stroke-linecap: round;
  }

  .white-case { stroke: #d4d2ca; }
  .white { stroke: #fff; }
  .yellow-case { stroke: #ecc47d; stroke-linecap: butt; }
  .yellow { stroke: #fcecb0; stroke-linecap: butt; }
  .orange-case { stroke: #e9b878; stroke-linecap: butt; }
  .orange { stroke: #f5ce8e; stroke-linecap: butt; }
  .orange .area { fill: #f5ce8e; }

  .tramline {
    fill: none;
    stroke: #c2c2c0;
    stroke-width: 4;
  }

  .railway {
    fill: none;
    stroke: #a8a8a4;
    stroke-width: 1.8;
    stroke-dasharray: 8 5;
  }

  .halo {
    fill: #fff;
    stroke: #fff;
    stroke-width: 3;
    stroke-linejoin: round;
    opacity: 0.8;
  }

  .blue-icon path:not(.halo) {
    fill: none;
    stroke: #4a86dc;
    stroke-width: 1.4;
  }

  .blue-icon path.solid {
    fill: #4a86dc;
  }

  .shield {
    fill: #fff;
    stroke: #777;
    stroke-width: 1.4;
  }

  .shield-no {
    fill: #555;
    font: 700 10px Roboto, sans-serif;
    text-anchor: middle;
  }

  .name {
    font-family: Roboto, 'Noto Sans CJK TC', sans-serif;
    paint-order: stroke;
    stroke: rgba(255, 255, 255, 0.85);
    stroke-width: 2.5px;
    stroke-linejoin: round;
    text-anchor: middle;
    white-space: pre;
  }

  .transit { fill: #3f7fe2; font-size: 11px; font-weight: 500; }
  .transit .zh { fill: #5e9ae4; font-size: 11.5px; font-weight: 400; }
  .plain { font-weight: 400; }
  .place { fill: #7b7b76; font-size: 11.5px; }
  .area { letter-spacing: 2px; }
  .name.area { fill: #5f5f5c; font-size: 13.5px; }
  .culture { fill: #a763a5; font-size: 11px; }
  .street { fill: #4b4b48; font-size: 11px; text-anchor: start; }

  .ring {
    fill: #fff;
    filter: drop-shadow(0 3px 3px rgba(0, 0, 0, 0.35));
  }

  .disc { fill: #4c80ee; }
  .pink .disc { fill: #de638a; }
  .shade { filter: drop-shadow(0 4px 5px rgba(0, 0, 0, 0.4)); }

  .zoom {
    position: absolute;
    top: 20px;
    left: 21px;
    width: 66px;
    border: 4px solid #6a9fd9;
    border-radius: 8px;
    background: #fff;
  }

  .zoom button {
    display: block;
    width: 58px;
    height: 59px;
    padding-top: 6px;
    font: 700 44px/53px 'Liberation Sans', sans-serif;
    text-align: center;
  }

  .zoom button:first-child {
    height: 61px;
    padding-top: 8px;
    border-bottom: 2px solid #ccc;
  }

  .notes {
    position: absolute;
    top: 32px;
    right: 32px;
    display: flex;
    flex-direction: column;
    align-items: flex-end;
    gap: 16px;
  }

  .note {
    height: 52px;
    padding: 0 26px;
    border-radius: 14px;
    background: #e4effc;
    box-shadow: 0 2px 5px rgba(0, 0, 0, 0.15);
    font-size: 24px;
    line-height: 53px;
    letter-spacing: -0.37px;
    white-space: nowrap;
  }

  .note.viewing {
    letter-spacing: -0.55px;
  }

  /* call prompt */
  .toast {
    position: absolute;
    z-index: 4;
    left: 887px;
    top: 1609px;
    display: flex;
    align-items: center;
    gap: 16px;
    width: 1150px;
    height: 131px;
    padding: 0 31px;
    border: 2px solid #e8e8e6;
    border-radius: 32px;
    background: #fefefd;
    box-shadow: 0 8px 24px rgba(0, 0, 0, 0.2);
  }

  .toast p {
    flex: 1;
    color: #737373;
    font-size: 28px;
    letter-spacing: -0.45px;
    white-space: nowrap;
  }

  .toast b {
    color: #0a0a0a;
    font-weight: 500;
  }

  .reject, .accept {
    gap: 12px;
    width: 156px;
    background: #d32422;
    color: #fff;
    font-weight: 500;
    letter-spacing: -0.4px;
  }

  .accept {
    width: 164px;
    gap: 14px;
    background: #51c662;
    letter-spacing: -0.6px;
  }
</style>
